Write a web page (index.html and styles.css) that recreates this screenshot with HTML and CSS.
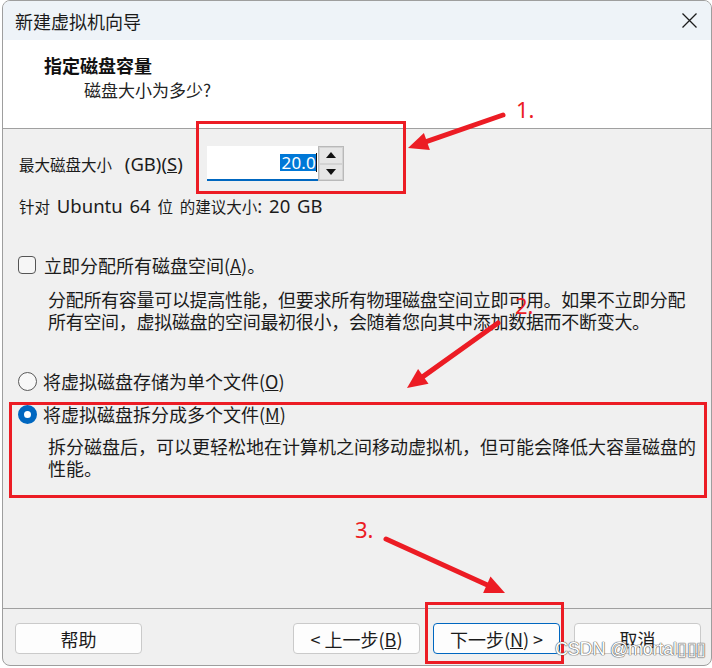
FILE: index.html
```html
<!DOCTYPE html>
<html lang="zh-CN">
<head>
<meta charset="utf-8">
<title>新建虚拟机向导</title>
<link rel="stylesheet" href="styles.css">
</head>
<body>
<div class="screen">
  <div class="window">
    <div class="titlebar">
      <span class="title">新建虚拟机向导</span>
      <svg class="close" width="15" height="15" viewBox="0 0 15 15"><path d="M0.5 0.5 L14.5 14.5 M14.5 0.5 L0.5 14.5" stroke="#1c1c1c" stroke-width="1.3" fill="none"/></svg>
    </div>
    <div class="header">
      <div class="h-title">指定磁盘容量</div>
      <div class="h-sub">磁盘大小为多少?</div>
    </div>
    <div class="content">
      <div class="size-row">
        <span class="size-label"><span class="zh">最大磁盘大小</span> (GB)(<u>S</u>)</span>
        <div class="spin-input"><span class="sel">20.0</span><span class="caret"></span></div>
        <div class="spin-btns">
          <div class="spin-btn"><svg width="10" height="6" viewBox="0 0 10 6"><path d="M5 0 L10 6 L0 6 Z" fill="#111"/></svg></div>
          <div class="spin-btn"><svg width="10" height="6" viewBox="0 0 10 6"><path d="M0 0 L10 0 L5 6 Z" fill="#111"/></svg></div>
        </div>
      </div>
      <div class="rec"><span class="zh">针对</span> Ubuntu 64 <span class="zh">位</span> <span class="zh">的建议大小</span>: 20 GB</div>
      <div class="opt opt-check">
        <span class="checkbox"></span>
        <span class="opt-label">立即分配所有磁盘空间(<u>A</u>)。</span>
      </div>
      <div class="desc">分配所有容量可以提高性能，但要求所有物理磁盘空间立即可用。如果不立即分配<br>所有空间，虚拟磁盘的空间最初很小，会随着您向其中添加数据而不断变大。</div>
      <div class="opt opt-radio1">
        <span class="radio"></span>
        <span class="opt-label">将虚拟磁盘存储为单个文件(<u>O</u>)</span>
      </div>
      <div class="opt opt-radio2">
        <span class="radio checked"></span>
        <span class="opt-label">将虚拟磁盘拆分成多个文件(<u>M</u>)</span>
      </div>
      <div class="desc desc2">拆分磁盘后，可以更轻松地在计算机之间移动虚拟机，但可能会降低大容量磁盘的<br>性能。</div>
    </div>
    <div class="footer">
      <button class="btn">帮助</button>
      <div class="spacer"></div>
      <button class="btn">&lt; 上一步(<u>B</u>)</button>
      <button class="btn btn-default">下一步(<u>N</u>) &gt;</button>
      <button class="btn btn-cancel">取消</button>
    </div>
  </div>
  <svg class="annot" width="712" height="668" viewBox="0 0 712 668">
    <g fill="none" stroke="#ec1c24" stroke-width="3">
      <rect x="197.5" y="122.5" width="207" height="70"/>
      <rect x="10.5" y="403.5" width="695" height="93"/>
      <rect x="426.5" y="603.5" width="136" height="59"/>
    </g>
    <g stroke="#ec1c24" stroke-width="5" stroke-linecap="round">
      <line x1="503" y1="115" x2="427" y2="141.4"/>
      <line x1="498" y1="323" x2="423.3" y2="376.4"/>
      <line x1="386" y1="539" x2="486.8" y2="584.7"/>
    </g>
    <g fill="#ec1c24">
      <polygon points="408,148 429.9,149.9 423.9,132.9"/>
      <polygon points="407,388 428.5,383.7 418.1,369.1"/>
      <polygon points="505,593 483.1,592.9 490.5,576.5"/>
    </g>
    <g class="num" fill="#ec1c24">
      <text x="516" y="118">1.</text>
      <text x="515" y="314">2.</text>
      <text x="355" y="538">3.</text>
    </g>
  </svg>
  <div class="watermark">CSDN @mortal▯▯▯</div>
</div>
</body>
</html>
```
FILE: styles.css
```css
* { box-sizing: border-box; }
html, body { margin: 0; padding: 0; background: #ffffff; }
body { font-family: "Noto Sans CJK SC", sans-serif; color: #1b1b1b; }

.screen { position: relative; width: 712px; height: 668px; overflow: hidden; }

.window {
  margin-left: 2px;
  width: 710px;
  height: 666px;
  border: 1px solid #9e9e9e;
  border-radius: 8px;
  overflow: hidden;
  display: flex;
  flex-direction: column;
  background: #f0f0f0;
}

.titlebar {
  height: 39px;
  flex: none;
  background: #eef3f8;
  display: flex;
  align-items: center;
  padding-left: 12px;
  padding-right: 14px;
}
.title { font-size: 18px; line-height: 24px; color: #1a1a1a; flex: 1; }
.close { display: block; }

.header {
  height: 89px;
  flex: none;
  background: #ffffff;
  border-bottom: 1px solid #a0a0a0;
  padding: 13px 0 0 41px;
}
.h-title { font-size: 18px; line-height: 24px; font-weight: 700; color: #111; }
.h-sub { font-size: 17px; line-height: 24px; margin-top: 1px; padding-left: 40px; color: #222; }

.content {
  flex: 1;
  display: flex;
  flex-direction: column;
  padding-left: 15px;
}

.zh { font-family: "Noto Sans CJK SC", sans-serif; font-size: 15.5px; word-spacing: 0; }

.size-row {
  margin-top: 17px;
  height: 35px;
  display: flex;
  align-items: center;
  padding-left: 1px;
}
.size-label {
  width: 188px;
  font-family: "Noto Sans", "Noto Sans CJK SC", sans-serif;
  font-size: 18.5px;
  line-height: 22px;
  word-spacing: 8px;
  color: #1b1b1b;
  white-space: nowrap;
}
.spin-input {
  width: 111px;
  height: 35px;
  background: #ffffff;
  border-bottom: 2px solid #0067c0;
  display: flex;
  align-items: center;
  justify-content: flex-end;
  padding-right: 1px;
}
.sel {
  background: #0078d7;
  color: #ffffff;
  font-family: "Noto Sans", sans-serif;
  font-size: 17px;
  line-height: 17px;
  height: 17px;
  padding: 0 0 0 1px;
  letter-spacing: 0.2px;
}
.caret { width: 1px; height: 19px; background: #111; }
.spin-btns {
  width: 26px;
  height: 35px;
  border: 1px solid #b9b9b9;
  display: flex;
  flex-direction: column;
  background: #f0f0f0;
}
.spin-btn {
  flex: 1;
  display: flex;
  align-items: center;
  justify-content: center;
  background: #e6e6e6;
  border: 1px solid #d3d3d3;
}

.rec {
  margin-top: 14px;
  padding-left: 1px;
  font-family: "Noto Sans", "Noto Sans CJK SC", sans-serif;
  font-size: 18.5px;
  line-height: 22px;
  word-spacing: 2px;
}

.opt {
  display: flex;
  align-items: center;
  height: 22px;
}
.opt-check { margin-top: 37px; }
.opt-radio1 { margin-top: 38px; }
.opt-radio2 { margin-top: 11px; }
.opt-label { font-size: 18px; line-height: 22px; color: #1b1b1b; }
.checkbox {
  width: 18px;
  height: 18px;
  border: 1px solid #555;
  border-radius: 4px;
  background: #f6f6f6;
  margin-right: 8px;
  flex: none;
}
.radio {
  width: 19px;
  height: 19px;
  border: 1px solid #5a5a5a;
  border-radius: 50%;
  background: #f8f8f8;
  margin-right: 6px;
  flex: none;
}
.radio.checked {
  border: 6px solid #0067c0;
  background: #ffffff;
}

.desc {
  margin-top: 12px;
  padding-left: 30px;
  font-size: 18px;
  line-height: 22px;
  letter-spacing: -0.3px;
  color: #1b1b1b;
  white-space: nowrap;
}
.desc2 { margin-top: 10px; letter-spacing: 0; }

.footer {
  height: 57px;
  flex: none;
  border-top: 1px solid #a0a0a0;
  display: flex;
  align-items: flex-start;
  padding: 14px 10px 0 12px;
  gap: 13px;
}
.spacer { flex: 1; }
.btn {
  width: 127px;
  height: 31px;
  border: 1px solid #cacaca;
  border-radius: 4px;
  background: #fdfdfd;
  font-family: "Noto Sans CJK SC", sans-serif;
  font-size: 18px;
  line-height: 22px;
  color: #1b1b1b;
  padding: 0;
  display: flex;
  align-items: center;
  justify-content: center;
}
.btn-default { border: 1px solid #0067c0; }
.btn-cancel { margin-left: 1px; }

.annot { position: absolute; left: 0; top: 0; pointer-events: none; }
.num text { font-family: "Noto Sans", sans-serif; font-size: 22px; }

.watermark {
  position: absolute;
  left: 555px;
  top: 638px;
  font-family: "Liberation Sans", sans-serif;
  font-size: 18px;
  line-height: 22px;
  color: #ffffff;
  text-shadow: 0 0 1px #555, 0 0 1px #555, 0 0 1px #555;
  letter-spacing: -0.2px;
}
```
